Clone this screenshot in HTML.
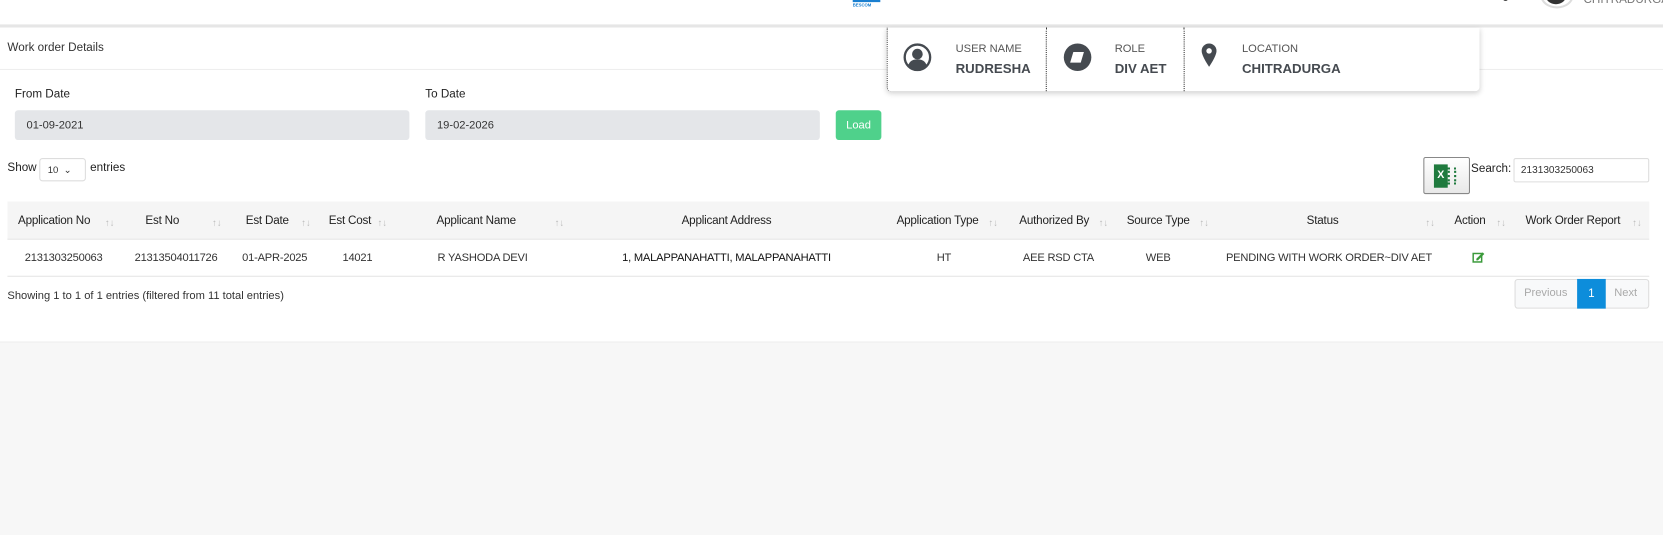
<!DOCTYPE html><html><head><style>
*{margin:0;padding:0;box-sizing:border-box}
html,body{width:1663px;height:535px;overflow:hidden;background:#f7f7f7}
#w{width:1568px;height:505px;position:relative;transform:scale(1.0606);transform-origin:0 0;font-family:"Liberation Sans",sans-serif;color:#333;font-size:11px}
.a{position:absolute;white-space:nowrap}
.c{transform:translateX(-50%)}
.h{font-size:11px;color:#222;top:202px;letter-spacing:-.2px}
.d{font-size:10.5px;color:#333;top:237px;letter-spacing:-.2px}
.s{color:#bbb;font-size:9px;top:205px}
</style></head><body><div id="w">
<div class="a" style="left:0;top:0;width:1568px;height:23px;background:#fff"></div>
<div class="a" style="left:0;top:23px;width:1568px;height:3px;background:#e6e6e6"></div>
<div class="a" style="left:804px;top:0;width:26px;height:2px;background:#1a7fd0"></div>
<div class="a" style="left:804px;top:2px;font-size:4px;color:#1a7fd0;font-weight:bold">BESCOM</div>
<div class="a" style="left:1417px;top:-4px;width:5px;height:5px;background:#444;border-radius:50%"></div>
<div class="a" style="left:1452px;top:-18px;width:32px;height:26px;border:2px solid #ddd;border-radius:50%;background:#fff"></div>
<div class="a" style="left:1457px;top:-14px;width:20px;height:18px;background:#333;border-radius:50%"></div>
<div class="a" style="left:1493px;top:-6px;font-size:11px;color:#777">CHITRADURGA</div>
<div class="a" style="left:0;top:26px;width:1568px;height:297px;background:#fff;border-bottom:1px solid #eee"></div>
<div class="a" style="left:7px;top:39px;font-size:11px;color:#333">Work order Details</div>
<div class="a" style="left:0;top:65px;width:1568px;height:1px;background:#eee"></div>
<div class="a" style="left:836px;top:26px;width:559px;height:60px;background:#fff;border-radius:0 0 4px 4px;box-shadow:0 2px 5px rgba(0,0,0,.18);border-left:1px dotted #333"></div>
<div class="a" style="left:986px;top:26px;height:60px;border-left:1px dotted #333"></div>
<div class="a" style="left:1116px;top:26px;height:60px;border-left:1px dotted #333"></div>
<svg class="a" style="left:851px;top:40px" width="28" height="28" viewBox="0 0 28 28"><circle cx="14" cy="14" r="12" fill="none" stroke="#454a50" stroke-width="2.2"/><circle cx="14" cy="11" r="5" fill="#454a50"/><path d="M5 22c2-5 5-6 9-6s7 1 9 6a12 12 0 0 1-18 0z" fill="#454a50"/></svg>
<svg class="a" style="left:1002px;top:40px" width="28" height="28" viewBox="0 0 28 28"><circle cx="14" cy="14" r="13" fill="#454a50"/><path d="M10 9h10l-3 10H7z" fill="#fff"/></svg>
<svg class="a" style="left:1132px;top:40px" width="16" height="30" viewBox="0 0 16 30"><path d="M8 1a7 7 0 0 0-7 7c0 5 7 15 7 15s7-10 7-15a7 7 0 0 0-7-7z" fill="#454a50"/><circle cx="8" cy="8" r="2.6" fill="#fff"/></svg>
<div class="a" style="left:901px;top:40px;font-size:10.5px;color:#555">USER NAME</div>
<div class="a" style="left:901px;top:58px;font-size:12.5px;font-weight:bold;color:#454a50">RUDRESHA</div>
<div class="a" style="left:1051px;top:40px;font-size:10.5px;color:#555">ROLE</div>
<div class="a" style="left:1051px;top:58px;font-size:12.5px;font-weight:bold;color:#454a50">DIV AET</div>
<div class="a" style="left:1171px;top:40px;font-size:10.5px;color:#555">LOCATION</div>
<div class="a" style="left:1171px;top:58px;font-size:12.5px;font-weight:bold;color:#454a50">CHITRADURGA</div>
<div class="a" style="left:14px;top:83px;font-size:11px;color:#222">From Date</div>
<div class="a" style="left:401px;top:83px;font-size:11px;color:#222">To Date</div>
<div class="a" style="left:14px;top:104px;width:372px;height:28px;background:#e4e6e9;border-radius:3px;padding:8px 11px;font-size:10.5px;color:#333">01-09-2021</div>
<div class="a" style="left:401px;top:104px;width:372px;height:28px;background:#e4e6e9;border-radius:3px;padding:8px 11px;font-size:10.5px;color:#333">19-02-2026</div>
<div class="a" style="left:788px;top:104px;width:43px;height:28px;background:#4fd18b;border-radius:3px;color:#fff;font-size:10.5px;text-align:center;line-height:28px">Load</div>
<div class="a" style="left:7px;top:152px;font-size:11px;color:#222">Show</div>
<div class="a" style="left:37px;top:149px;width:44px;height:22px;border:1px solid #ddd;border-radius:3px;font-size:9px;padding:5px 7px;color:#333">10 &nbsp;⌄</div>
<div class="a" style="left:85px;top:152px;font-size:11px;color:#222">entries</div>
<div class="a" style="left:1342px;top:148px;width:44px;height:35px;border:1px solid #888;border-radius:2px;background:linear-gradient(#fff,#e8e8e8)"></div>
<div class="a" style="left:1352px;top:155px;width:13px;height:22px;background:#1f7a3e;color:#fff;font-size:10px;font-weight:bold;text-align:center;line-height:22px">X</div>
<div class="a" style="left:1365px;top:158px;width:8px;height:16px;border-left:2px dotted #1f7a3e;border-right:2px dotted #1f7a3e"></div>
<div class="a" style="left:1387px;top:153px;font-size:11px;color:#222">Search:</div>
<div class="a" style="left:1427px;top:149px;width:128px;height:23px;border:1px solid #ddd;border-radius:2px;font-size:9.5px;padding:5px 6px;color:#333">2131303250063</div>
<div class="a" style="left:7px;top:190px;width:1548px;height:36px;background:#f5f5f5;border-bottom:1px solid #e5e5e5"></div>
<div class="a" style="left:7px;top:260px;width:1548px;height:1px;background:#e5e5e5"></div>
<div class="a h" style="left:17px">Application No</div><div class="a s" style="left:99px">↑↓</div>
<div class="a h c" style="left:153px">Est No</div><div class="a s" style="left:200px">↑↓</div>
<div class="a h c" style="left:252px">Est Date</div><div class="a s" style="left:284px">↑↓</div>
<div class="a h c" style="left:330px">Est Cost</div><div class="a s" style="left:356px">↑↓</div>
<div class="a h c" style="left:449px">Applicant Name</div><div class="a s" style="left:523px">↑↓</div>
<div class="a h c" style="left:685px">Applicant Address</div>
<div class="a h c" style="left:884px">Application Type</div><div class="a s" style="left:932px">↑↓</div>
<div class="a h c" style="left:994px">Authorized By</div><div class="a s" style="left:1036px">↑↓</div>
<div class="a h c" style="left:1092px">Source Type</div><div class="a s" style="left:1131px">↑↓</div>
<div class="a h c" style="left:1247px">Status</div><div class="a s" style="left:1344px">↑↓</div>
<div class="a h c" style="left:1386px">Action</div><div class="a s" style="left:1411px">↑↓</div>
<div class="a h c" style="left:1483px">Work Order Report</div><div class="a s" style="left:1539px">↑↓</div>
<div class="a d c" style="left:60px">2131303250063</div>
<div class="a d c" style="left:166px">21313504011726</div>
<div class="a d c" style="left:259px">01-APR-2025</div>
<div class="a d c" style="left:337px">14021</div>
<div class="a d c" style="left:455px">R YASHODA DEVI</div>
<div class="a d c" style="left:685px;color:#111">1, MALAPPANAHATTI, MALAPPANAHATTI</div>
<div class="a d c" style="left:890px">HT</div>
<div class="a d c" style="left:998px">AEE RSD CTA</div>
<div class="a d c" style="left:1092px">WEB</div>
<div class="a d c" style="left:1253px">PENDING WITH WORK ORDER~DIV AET</div>
<svg class="a" style="left:1388px;top:237px" width="12" height="11" viewBox="0 0 12 11"><rect x="1" y="2" width="8" height="8" fill="none" stroke="#3a9a3a" stroke-width="1.4"/><path d="M4 7l6-6 1.5 1.5-6 6H4z" fill="#3a9a3a"/></svg>
<div class="a" style="left:7px;top:273px;font-size:10.5px;color:#333">Showing 1 to 1 of 1 entries (filtered from 11 total entries)</div>
<div class="a" style="left:1428px;top:263px;width:127px;height:28px;border:1px solid #ddd;border-radius:3px;background:#f8f9fa"></div>
<div class="a" style="left:1437px;top:270px;font-size:10.5px;color:#aaa">Previous</div>
<div class="a" style="left:1487px;top:263px;width:27px;height:28px;background:#0d8ddb;color:#fff;font-size:11px;text-align:center;line-height:28px">1</div>
<div class="a" style="left:1522px;top:270px;font-size:10.5px;color:#aaa">Next</div>
</div></body></html>
